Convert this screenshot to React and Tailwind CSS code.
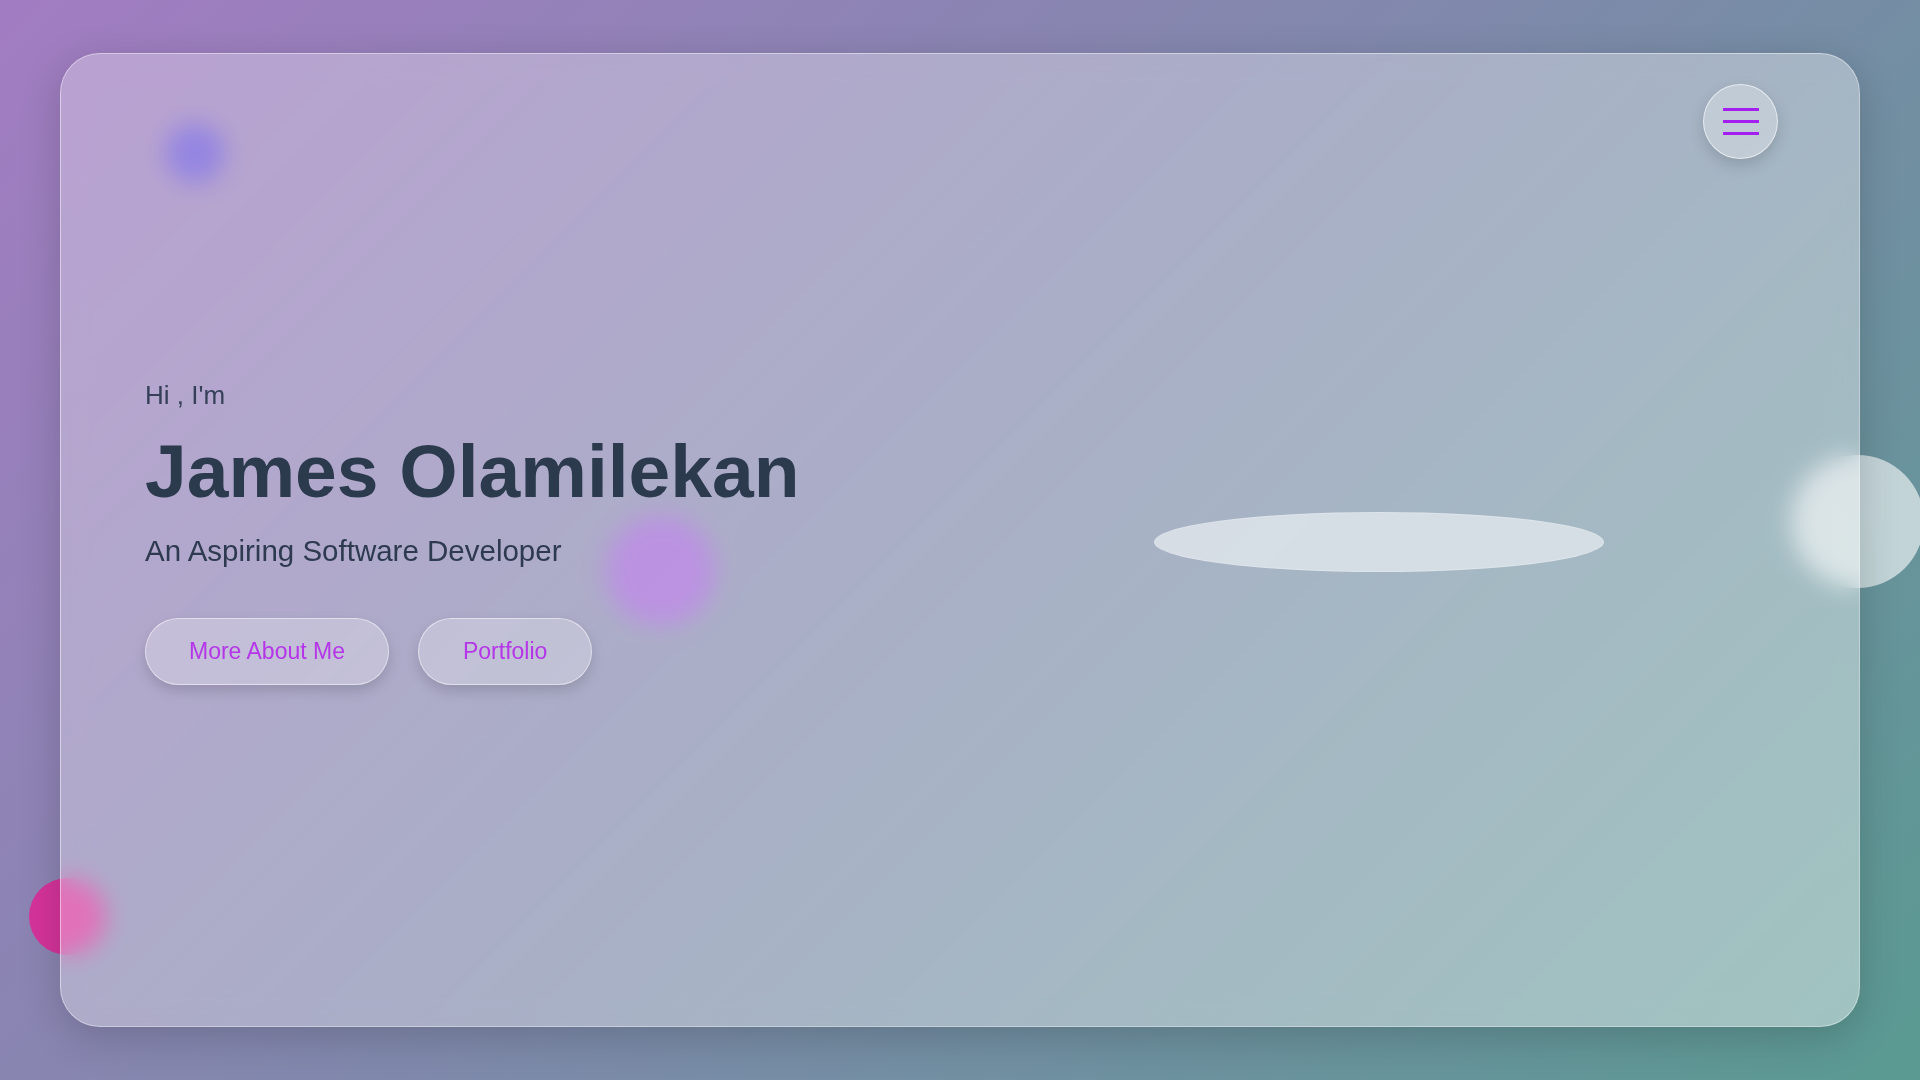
export default function App() {
  return (
    <div className="relative h-[1080px] w-full overflow-hidden bg-[linear-gradient(135deg,#a27cc2_0%,#7f89ab_50%,#5a9a92_100%)] px-[60px] py-[53px] font-['Liberation_Sans',Arial,sans-serif]">
      {/* decorative blobs behind the glass card */}
      <div className="absolute left-[165px] top-[123px] h-[60px] w-[60px] rounded-full bg-[#6a55d6]" />
      <div className="absolute left-[606px] top-[516px] h-[110px] w-[110px] rounded-full bg-[#9c60d4]" />
      <div className="absolute left-[29px] top-[878px] h-[77px] w-[77px] rounded-full bg-[#d4339a]" />
      <div className="absolute left-[1791px] top-[455px] h-[133px] w-[133px] rounded-full bg-white/60" />

      <section className="relative z-10 flex h-full flex-col rounded-[40px] border border-white/40 bg-[linear-gradient(135deg,rgba(255,255,255,0.28)_0%,rgba(255,255,255,0.33)_50%,rgba(255,255,255,0.42)_100%)] shadow-[0_10px_40px_rgba(0,0,0,0.18)] backdrop-blur-[12px]">
        <header className="flex justify-end pr-[81px] pt-[30px]">
          <button className="flex h-[75px] w-[75px] flex-col items-center justify-center gap-[9px] rounded-full border border-white/60 bg-white/30 shadow-[0_6px_16px_rgba(0,0,0,0.15)]">
            <span className="h-[3px] w-[36px] bg-[#a21ff0]" />
            <span className="h-[3px] w-[36px] bg-[#a21ff0]" />
            <span className="h-[3px] w-[36px] bg-[#a21ff0]" />
          </button>
        </header>

        <div className="flex flex-1 justify-between pl-[84px] pr-[255px]">
          <div className="pt-[220px]">
            <p className="text-[26px] leading-[32px] text-[#364159]">Hi , I'm</p>
            <h1 className="mt-[20px] text-[75px] font-bold leading-[80px] text-[#2c3a4d]">James Olamilekan</h1>
            <p className="mt-[22px] text-[29.5px] leading-[36px] text-[#2d3a4f]">An Aspiring Software Developer</p>
            <div className="mt-[49px] flex gap-[29px]">
              <button className="h-[67px] rounded-full border border-white/50 bg-white/25 px-[43px] text-[23px] text-[#b535e8] shadow-[0_6px_14px_rgba(0,0,0,0.15)]">
                More About Me
              </button>
              <button className="h-[67px] rounded-full border border-white/50 bg-white/25 px-[44px] text-[23px] text-[#b535e8] shadow-[0_6px_14px_rgba(0,0,0,0.15)]">
                Portfolio
              </button>
            </div>
          </div>
          <div className="pt-[353px]">
            <div className="h-[60px] w-[450px] rounded-[50%] border border-white/20 bg-[#dbe2e9]/90" />
          </div>
        </div>
      </section>
    </div>
  )
}
